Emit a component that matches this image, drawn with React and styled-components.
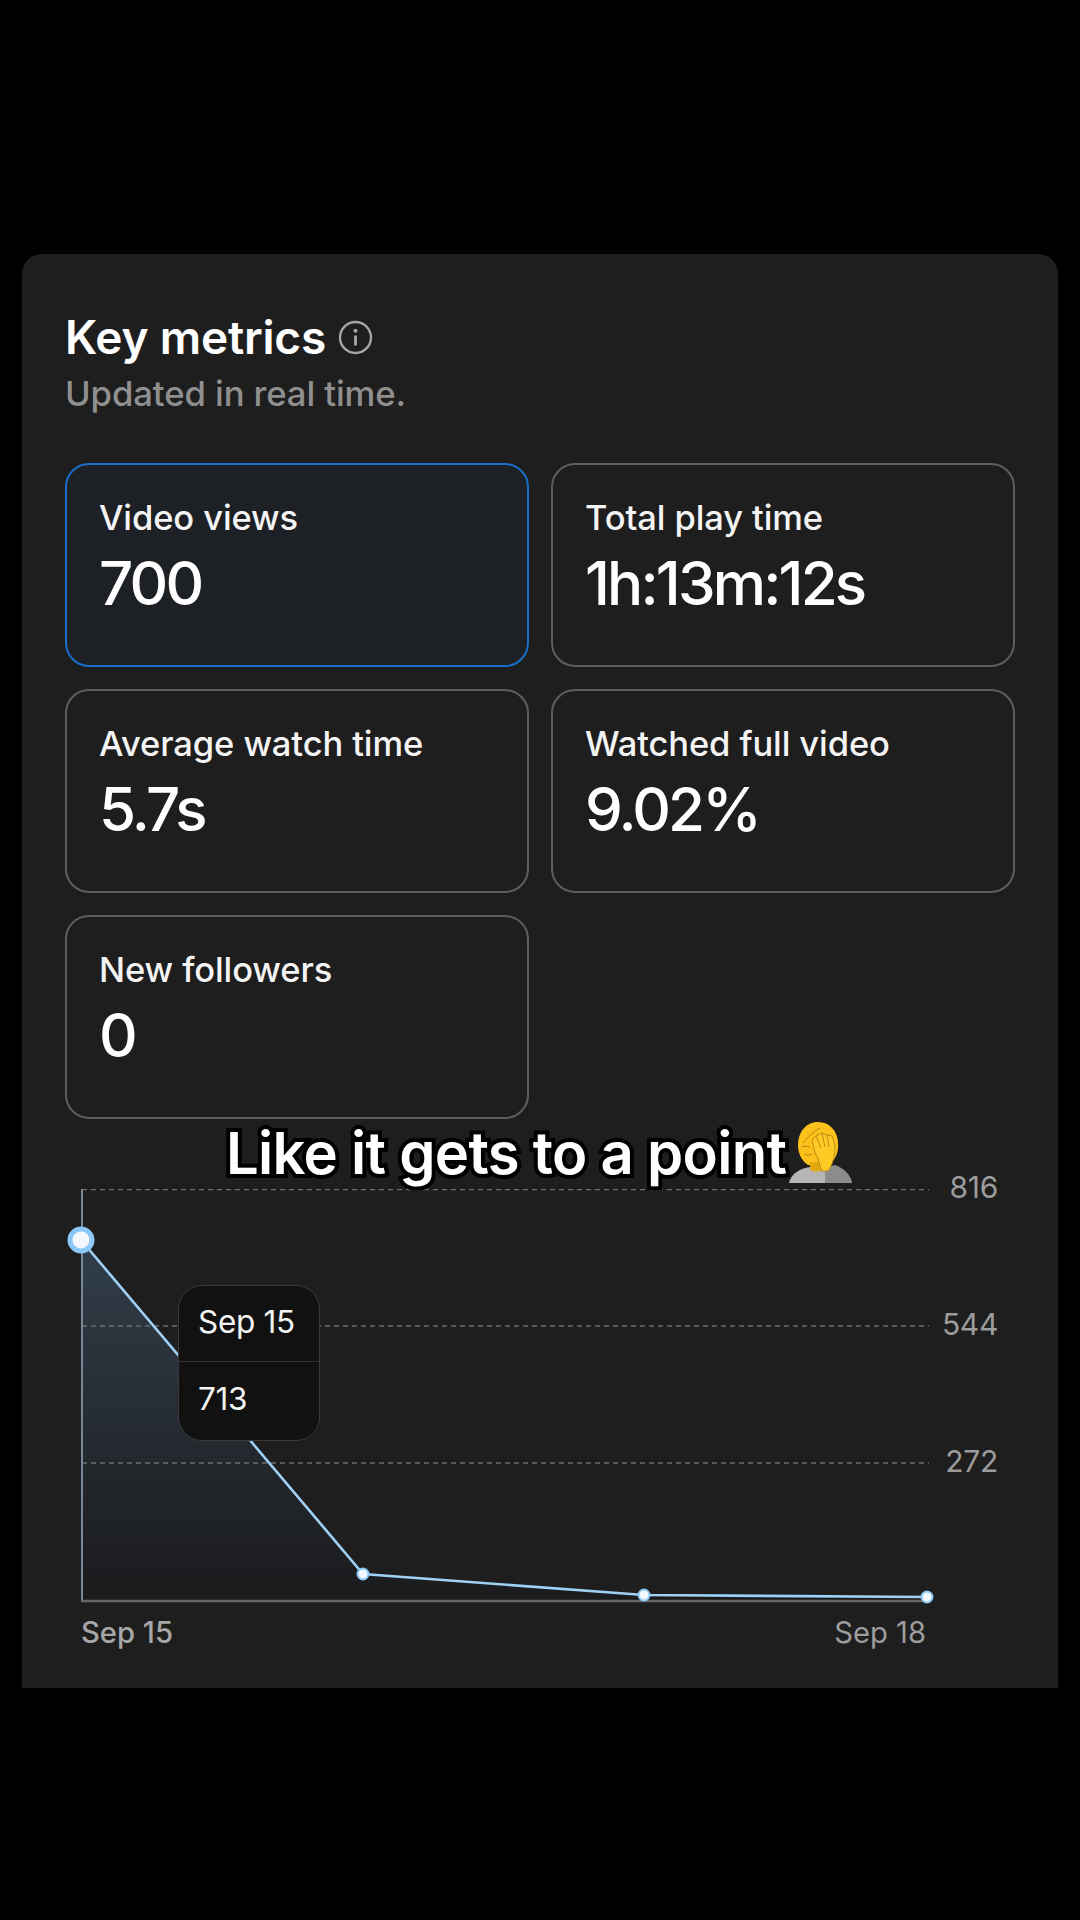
import React from "react";
import styled, { createGlobalStyle } from "styled-components";

const metrics = [
  { label: "Video views", value: "700", active: true },
  { label: "Total play time", value: "1h:13m:12s" },
  { label: "Average watch time", value: "5.7s" },
  { label: "Watched full video", value: "9.02%" },
  { label: "New followers", value: "0" },
];

const App = () => {
  return (
    <Page>
      <GlobalStyle />
      <Panel>
        <TitleRow>
          <Title>Key metrics</Title>
          <InfoIcon />
        </TitleRow>
        <Subtitle>Updated in real time.</Subtitle>
        <MetricGrid>
          {metrics.map((m) => (
            <MetricCard key={m.label} $active={m.active}>
              <MetricLabel>{m.label}</MetricLabel>
              <MetricValue>{m.value}</MetricValue>
            </MetricCard>
          ))}
        </MetricGrid>
        <ChartArea>
          <Chart />
          <YLabels>
            <YLabel>816</YLabel>
            <YLabel>544</YLabel>
            <YLabel>272</YLabel>
          </YLabels>
          <XLabels>
            <span>Sep 15</span>
            <span>Sep 18</span>
          </XLabels>
          <Tooltip>
            <TooltipRow>Sep 15</TooltipRow>
            <TooltipRow>713</TooltipRow>
          </Tooltip>
        </ChartArea>
        <Caption>
          <CaptionText>Like it gets to a point</CaptionText>
          <Facepalm />
        </Caption>
      </Panel>
    </Page>
  );
};

const InfoIcon = () => (
  <svg width="35" height="35" viewBox="0 0 35 35" fill="none">
    <circle cx="17.5" cy="17.5" r="15.5" stroke="#a6a6a6" strokeWidth="2.4" />
    <circle cx="17.5" cy="10.8" r="2" fill="#a6a6a6" />
    <path d="M17.5 15.5v10" stroke="#a6a6a6" strokeWidth="2.8" />
  </svg>
);

// chart coords are relative to the chart area, which starts at x=22 y=1189 on the page
const Chart = () => (
  <ChartSvg width="1036" height="420" viewBox="0 0 1036 420">
    <defs>
      <linearGradient id="fill" x1="0" y1="0" x2="0" y2="1">
        <stop offset="0" stopColor="#33424f" stopOpacity="0.9" />
        <stop offset="1" stopColor="#1a1a1c" stopOpacity="0.85" />
      </linearGradient>
    </defs>
    <path d="M60 51L341 385L622 406L905 408V412H60Z" fill="url(#fill)" />
    {[0.5, 137, 274].map((y) => (
      <line key={y} x1="60" x2="907" y1={y} y2={y} stroke="#6e6e6e" strokeWidth="1.3" strokeDasharray="5 4" />
    ))}
    <line x1="60" x2="60" y1="0" y2="412" stroke="#76889a" strokeWidth="2" />
    <line x1="59" x2="906" y1="412" y2="412" stroke="#666" strokeWidth="2.4" />
    <path d="M59 51L341 385L622 406L905 408" fill="none" stroke="#9fd0f5" strokeWidth="2.6" />
    <circle cx="59" cy="51" r="11" fill="#f2f8fd" stroke="#8cc8f5" strokeWidth="5" />
    <circle cx="341" cy="385" r="5.5" fill="#f2f8fd" stroke="#8cc8f5" strokeWidth="2" />
    <circle cx="622" cy="406" r="5.5" fill="#f2f8fd" stroke="#8cc8f5" strokeWidth="2" />
    <circle cx="905" cy="408" r="5.5" fill="#f2f8fd" stroke="#8cc8f5" strokeWidth="2" />
  </ChartSvg>
);

const Facepalm = () => (
  <FacepalmSvg width="64" height="64" viewBox="0 0 64 64">
    <path d="M0 62C2 52 12 47 22 46H42C52 47 61 52 63 62Z" fill="#b5b5b5" />
    <path d="M29 1C17 1 9 11 9 24C9 33 13 40 19 44H40C46 39 50 32 49 21C48 10 41 1 29 1Z" fill="#fcc21b" />
    <path d="M21 41H33V49Q27 52 21 49Z" fill="#e3a80f" />
    <path d="M36 47L46 44C54 47 61 52 63 62H36Z" fill="#8c8c8c" />
    <path d="M23 19L27 15L33 12L38 14L43 15L46 24C46 34 44 44 39 50H33C30 44 30 38 26 32Z" fill="#ffca26" stroke="#a97b12" strokeWidth="0.8" />
    <path d="M27 15L32 27M33 12L36 26M38 14L40 26" stroke="#a97b12" strokeWidth="0.8" fill="none" />
    <path d="M31 7C25 10 19 16 14 22M13 26Q17 24 21 26M15 33Q19 36 23 33" stroke="#a97b12" strokeWidth="0.9" fill="none" />
  </FacepalmSvg>
);

const GlobalStyle = createGlobalStyle`
  body {
    margin: 0;
    background: #000;
    font-family: Inter, "Liberation Sans", sans-serif;
  }
`;

const Page = styled.div`
  width: 1080px;
  height: 1920px;
  padding: 254px 22px 0;
  box-sizing: border-box;
  background: #000;
  overflow: hidden;
`;
const Panel = styled.div`
  position: relative;
  height: 1434px;
  box-sizing: border-box;
  padding: 58px 43px 0;
  background: #1e1e1e;
  border-radius: 20px 20px 0 0;
`;
const TitleRow = styled.div`
  display: flex;
  align-items: center;
  gap: 12px;
  height: 50px;
`;
const Title = styled.h2`
  margin: 0;
  font-size: 46px;
  line-height: 50px;
  font-weight: 600;
  letter-spacing: -0.2px;
  color: #fff;
`;
const Subtitle = styled.div`
  margin-top: 11px;
  font-size: 34.7px;
  line-height: 40px;
  font-weight: 500;
  letter-spacing: -0.1px;
  color: #8f8f8f;
`;
const MetricGrid = styled.div`
  display: grid;
  grid-template-columns: 464px 464px;
  grid-auto-rows: 204px;
  gap: 22px;
  margin-top: 50px;
`;
const MetricCard = styled.div`
  box-sizing: border-box;
  padding: 33px 32px 0;
  border-radius: 24px;
  border: 2px solid ${(p) => (p.$active ? "#1a6dc8" : "#5e5e5e")};
  background: ${(p) => (p.$active ? "#1d2025" : "transparent")};
`;
const MetricLabel = styled.div`
  font-size: 34.5px;
  line-height: 40px;
  font-weight: 500;
  letter-spacing: -0.1px;
  color: #f4f4f4;
`;
const MetricValue = styled.div`
  margin-top: 13px;
  font-size: 60px;
  line-height: 64px;
  font-weight: 500;
  letter-spacing: -2.8px;
  color: #fff;
`;
const ChartArea = styled.div`
  position: absolute;
  left: 0;
  right: 0;
  top: 935px;
  height: 480px;
`;
const ChartSvg = styled.svg`
  display: block;
`;
const YLabels = styled.div`
  position: absolute;
  right: 60px;
  top: -20px;
  display: flex;
  flex-direction: column;
  gap: 101px;
  align-items: flex-end;
`;
const YLabel = styled.div`
  font-size: 30px;
  line-height: 36px;
  letter-spacing: -0.3px;
  color: #9c9c9c;
`;
const XLabels = styled.div`
  position: absolute;
  left: 59px;
  top: 426px;
  width: 845px;
  display: flex;
  justify-content: space-between;
  font-size: 29.2px;
  line-height: 36px;
  color: #9c9c9c;
  & > span:first-child {
    font-weight: 500;
    color: #a6a6a6;
  }
`;
const Tooltip = styled.div`
  position: absolute;
  left: 156px;
  top: 96px;
  width: 142px;
  height: 156px;
  box-sizing: border-box;
  border: 1.5px solid #3a3a3a;
  border-radius: 24px;
  background: #111;
  display: grid;
  grid-template-rows: 75px 1fr;
`;
const TooltipRow = styled.div`
  display: flex;
  align-items: center;
  padding: 0 0 4px 19px;
  font-size: 31.5px;
  letter-spacing: -0.3px;
  color: #f4f4f4;
  & + & {
    padding-bottom: 6px;
    border-top: 1.5px solid #333;
  }
`;
const Caption = styled.div`
  position: absolute;
  left: 204px;
  top: 864px;
  display: flex;
  align-items: center;
`;
const CaptionText = styled.span`
  font-size: 58px;
  line-height: 70px;
  font-weight: 600;
  letter-spacing: -0.7px;
  color: #fff;
  -webkit-text-stroke: 8px #000;
  paint-order: stroke fill;
  white-space: nowrap;
`;
const FacepalmSvg = styled.svg`
  display: block;
  margin-left: 3px;
`;

export default App;
